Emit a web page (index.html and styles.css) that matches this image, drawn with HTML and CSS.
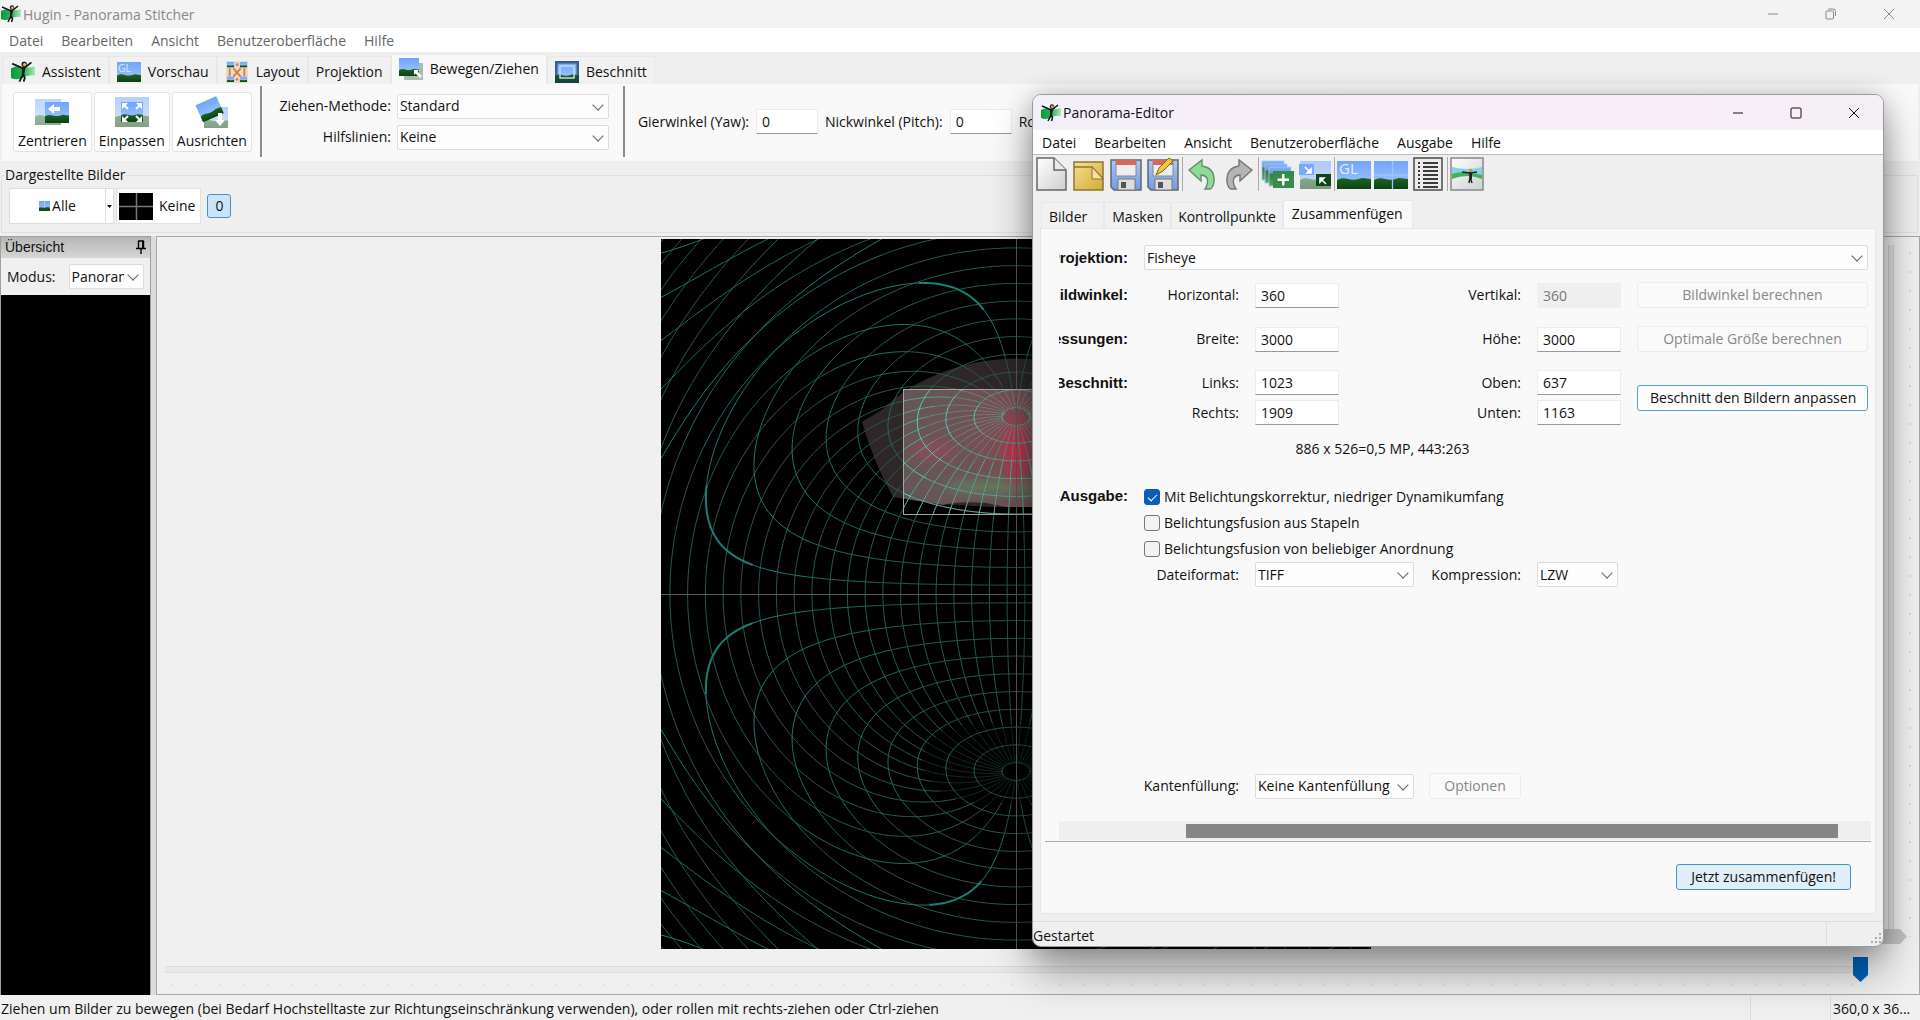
FILE: index.html
```html
<!DOCTYPE html>
<html lang="de">
<head>
<meta charset="utf-8">
<title>Hugin - Panorama Stitcher</title>
<link rel="stylesheet" href="styles.css">
</head>
<body>
<svg class="defs" aria-hidden="true">
  <defs>
    <linearGradient id="sky" x1="0" y1="0" x2="0" y2="1"><stop offset="0" stop-color="#6fa5fb"/><stop offset="1" stop-color="#a4c8ff"/></linearGradient>
    <linearGradient id="hill" x1="0" y1="0" x2="0" y2="1"><stop offset="0" stop-color="#1f6420"/><stop offset="1" stop-color="#0b4214"/></linearGradient>
    <linearGradient id="paper" x1="0" y1="0" x2="1" y2="1"><stop offset="0" stop-color="#fff"/><stop offset="1" stop-color="#cfcfcf"/></linearGradient>
    <linearGradient id="gold" x1="0" y1="0" x2="1" y2="1"><stop offset="0" stop-color="#f7e08a"/><stop offset="1" stop-color="#d3aa3a"/></linearGradient>
    <linearGradient id="disk" x1="0" y1="0" x2="0" y2="1"><stop offset="0" stop-color="#a9c8f7"/><stop offset="1" stop-color="#6f9de6"/></linearGradient>
    <linearGradient id="leaf" x1="0" y1="0" x2="1" y2="0"><stop offset="0" stop-color="#0a9a3c"/><stop offset=".55" stop-color="#2cb457"/><stop offset="1" stop-color="#a9ecb6"/></linearGradient>
    <linearGradient id="stack" x1="0" y1="0" x2="0" y2="1"><stop offset="0" stop-color="#7fb0fb"/><stop offset=".3" stop-color="#6f9fd8"/><stop offset=".4" stop-color="#2f7c42"/><stop offset="1" stop-color="#5fa468"/></linearGradient>
  </defs>
  <symbol id="land" viewBox="0 0 34 28" preserveAspectRatio="none"><rect width="34" height="28" fill="url(#sky)"/><path d="M0 19Q5 16 11 18Q18 20 25 17L34 18V28H0Z" fill="url(#hill)"/></symbol>
  <symbol id="man" viewBox="0 0 20 18"><path d="M0 6Q5 3 10 5Q15 6 20 4V12Q14 11 9 14Q4 16 0 14Z" fill="url(#leaf)"/><path d="M1 2L9 5.500L12 5L17 1M10.500 5L10 11L7 17M10 10L11.500 14L10.500 17" stroke="#151515" stroke-width="1.500" fill="none"/><path d="M9 5H12L11 11H9Z" fill="#151515"/><circle cx="11" cy="2.500" r="2.200" fill="#222"/><circle cx="11.300" cy="2.800" r="1.300" fill="#e6c54a"/></symbol>
</svg>

<div class="main-window">
  <header class="titlebar">
    <svg class="app-icon"><use href="#man"/></svg>
    <span class="title">Hugin - Panorama Stitcher</span>
    <button class="win-btn" aria-label="Minimieren"><svg viewBox="0 0 12 12"><path d="M1 6H11"/></svg></button>
    <button class="win-btn" aria-label="Wiederherstellen"><svg viewBox="0 0 12 12"><rect x="1" y="3" width="7.500" height="8" rx="1"/><path d="M3 1.500Q3 1 4 1H8Q10.500 1 10.500 3.500V8"/></svg></button>
    <button class="win-btn" aria-label="Schließen"><svg viewBox="0 0 12 12"><path d="M1 1L11 11M11 1L1 11"/></svg></button>
  </header>
  <nav class="menubar">
    <a href="#">Datei</a><a href="#">Bearbeiten</a><a href="#">Ansicht</a><a href="#">Benutzeroberfläche</a><a href="#">Hilfe</a>
  </nav>
  <div class="tabs" role="tablist">
    <button role="tab" class="tab"><svg class="tab-icon" viewBox="0 0 20 18"><use href="#man"/></svg>Assistent</button>
    <button role="tab" class="tab"><svg class="tab-icon" viewBox="0 0 25 21"><use href="#land" width="25" height="21"/><text class="gl-small" x="1" y="11">GL</text></svg>Vorschau</button>
    <button role="tab" class="tab"><svg class="tab-icon" viewBox="0 0 24 24"><rect width="24" height="24" fill="#e3dccf"/><use href="#land" x="1" y="1" width="8" height="6"/><use href="#land" x="15" y="1" width="8" height="6"/><use href="#land" x="1" y="17" width="8" height="6"/><use href="#land" x="15" y="17" width="8" height="6"/><path d="M4 8V17M20 8V17M8 8L16 17M16 8L8 17" stroke="#e07a35" stroke-width="2" fill="none"/><circle cx="12" cy="4" r="1.500" fill="#e07a35"/><circle cx="12" cy="20" r="1.500" fill="#e07a35"/></svg>Layout</button>
    <button role="tab" class="tab">Projektion</button>
    <button role="tab" class="tab active" aria-selected="true"><svg class="tab-icon" viewBox="0 0 24 22"><rect x="5" y="5" width="19" height="17" fill="#a9bfae"/><use href="#land" width="20" height="18"/><path d="M15 12H20L18.500 13.500L23 18L21 20L16.500 15.500L15 17Z" fill="#fff"/></svg>Bewegen/Ziehen</button>
    <button role="tab" class="tab"><svg class="tab-icon" viewBox="0 0 24 22"><use href="#land" width="24" height="22"/><rect x="1" y="1" width="22" height="20" fill="none" stroke="#1d3f5c" stroke-width="3" opacity=".7"/><rect x="5" y="5" width="14" height="12" fill="none" stroke="#c3d9ee" stroke-width="1.500"/></svg>Beschnitt</button>
  </div>
  <section class="drag-panel">
    <div class="big-buttons">
      <button class="big-btn"><svg viewBox="0 0 34 30"><use href="#land" y="2" width="26" height="26" opacity=".45"/><use href="#land" x="10" y="5" width="24" height="21"/><path d="M13 12L19 7V10H25V14H19V17Z" fill="#fff"/></svg>Zentrieren</button>
      <button class="big-btn"><svg viewBox="0 0 34 30"><use href="#land" width="34" height="30" opacity=".5"/><use href="#land" x="6" y="5" width="22" height="20"/><path d="M7 6H13L7 12ZM27 6H21L27 12ZM7 25H13L7 19ZM27 25H21L27 19Z" fill="#fff"/><path d="M8 7L13 12M26 7L21 12M8 24L13 19M26 24L21 19" stroke="#fff" stroke-width="2"/></svg>Einpassen</button>
      <button class="big-btn"><svg viewBox="0 0 34 32"><use href="#land" x="9" y="11" width="24" height="21" opacity=".5"/><g transform="rotate(-24 14 13)"><use href="#land" x="3" y="4" width="23" height="19"/></g><path d="M23 17H27V24H30L25 30L20 24H23Z" fill="#fff"/></svg>Ausrichten</button>
    </div>
    <div class="vline"></div>
    <div class="drag-options">
      <label for="drag">Ziehen-Methode:</label>
      <span class="select"><select id="drag"><option>Standard</option></select></span>
      <label for="guides">Hilfslinien:</label>
      <span class="select"><select id="guides"><option>Keine</option></select></span>
    </div>
    <div class="vline"></div>
    <div class="angles">
      <label for="yaw">Gierwinkel (Yaw):</label><input id="yaw" type="text" value="0">
      <label for="pitch">Nickwinkel (Pitch):</label><input id="pitch" type="text" value="0">
      <label for="roll">Ro</label>
    </div>
  </section>
  <fieldset class="shown-images">
    <legend>Dargestellte Bilder</legend>
    <div class="split-btn">
      <button class="all-btn"><svg viewBox="0 0 11 10"><use href="#land" width="11" height="10"/><path d="M5.500 0V6" stroke="#cfe0ff" stroke-width=".6"/></svg>Alle</button><button class="drop-btn" aria-label="Auswahl"><svg viewBox="0 0 5 3"><path d="M0 0H5L2.500 3Z"/></svg></button>
    </div>
    <button class="none-btn"><svg viewBox="0 0 34 27"><rect width="34" height="27"/><path d="M17.500 0V27M0 13.500H34" stroke="#777" stroke-width="1.500"/></svg>Keine</button>
    <button class="image-toggle" aria-pressed="true">0</button>
  </fieldset>
  <main class="workspace">
    <aside class="overview">
      <div class="pane-caption"><span>Übersicht</span><svg viewBox="0 0 10 14"><path d="M2 1H8M2.500 1V8M7.500 1V8M0 8.500H10M5 9V14" stroke="#000" fill="none" stroke-width="1.400"/><path d="M6 1H8V8H6Z"/></svg></div>
      <div class="mode-row">
        <label for="mode">Modus:</label>
        <span class="select"><select id="mode"><option>Panorama</option></select></span>
      </div>
      <div class="overview-canvas"></div>
    </aside>
    <section class="preview">
      <svg class="pano" viewBox="0 0 710 710">
        <defs>
          <clipPath id="frame"><rect width="710" height="710"/></clipPath>
          <clipPath id="crop"><rect x="242" y="151" width="210" height="124"/></clipPath>
          <radialGradient id="glow" gradientUnits="userSpaceOnUse" cx="355" cy="195" r="150"><stop offset="0" stop-color="#8e4853"/><stop offset=".35" stop-color="#705253"/><stop offset="1" stop-color="#605858"/></radialGradient>
          <radialGradient id="red" gradientUnits="userSpaceOnUse" cx="355" cy="214" r="44" gradientTransform="translate(213 0) scale(.4 1)"><stop offset="0" stop-color="#cf2c4c"/><stop offset="1" stop-color="#cf2c4c" stop-opacity="0"/></radialGradient>
          <filter id="soft" x="-30%" y="-100%" width="160%" height="300%"><feGaussianBlur stdDeviation="6"/></filter>
          <g id="graticule"></g>
        </defs>
        <rect width="710" height="710"/>
        <path d="M201 183L222 170Q250 142 300 127Q355 112 410 127Q470 142 509 183Q500 230 478 262L400 268H330L280 265L232 258Q212 222 201 183Z" fill="#2e2627"/>
        <g clip-path="url(#crop)">
          <path d="M201 183Q250 130 355 120Q470 130 509 183Q500 230 478 262L400 268H345L325 264Q300 262 282 266L232 258Q212 222 201 183Z" fill="url(#glow)"/>
          <ellipse cx="335" cy="248" rx="52" ry="5" fill="#5f8a62" filter="url(#soft)"/>
          <ellipse cx="272" cy="212" rx="22" ry="10" fill="#98485a" filter="url(#soft)" opacity=".7"/>
          <circle cx="355" cy="214" r="44" fill="url(#red)"/>
        </g>
        <g clip-path="url(#frame)"><use href="#graticule" class="grid-lines"/></g>
        <g clip-path="url(#crop)"><use href="#graticule" class="grid-lines lit"/></g>
        <path d="M0 355.500H710M355.500 0V710" stroke="#555b59" fill="none"/>
        <rect x="242.500" y="150.500" width="210" height="125" fill="none" stroke="#a5a5a5"/>
      </svg>
      <div class="v-slider">
        <input type="range" class="range-v" min="0" max="360" value="360" aria-label="Vertikaler Bildwinkel">
        <div class="v-ticks"></div>
      </div>
      <div class="h-slider">
        <input type="range" class="range-h" min="0" max="360" value="360" aria-label="Horizontaler Bildwinkel">
        <div class="h-ticks"></div>
      </div>
    </section>
  </main>
  <footer class="statusbar">
    <span class="status-text">Ziehen um Bilder zu bewegen (bei Bedarf Hochstelltaste zur Richtungseinschränkung verwenden), oder rollen mit rechts-ziehen oder Ctrl-ziehen</span>
    <span class="status-mid"></span>
    <span class="status-fov">360,0 x 36...</span>
  </footer>
</div>

<div class="editor-window">
  <header class="titlebar">
    <svg class="app-icon"><use href="#man"/></svg>
    <span class="title">Panorama-Editor</span>
    <button class="win-btn" aria-label="Minimieren"><svg viewBox="0 0 12 12"><path d="M1 6H11"/></svg></button>
    <button class="win-btn" aria-label="Maximieren"><svg viewBox="0 0 12 12"><rect x="1" y="1" width="10" height="10" rx="1"/></svg></button>
    <button class="win-btn" aria-label="Schließen"><svg viewBox="0 0 12 12"><path d="M1 1L11 11M11 1L1 11"/></svg></button>
  </header>
  <nav class="menubar">
    <a href="#">Datei</a><a href="#">Bearbeiten</a><a href="#">Ansicht</a><a href="#">Benutzeroberfläche</a><a href="#">Ausgabe</a><a href="#">Hilfe</a>
  </nav>
  <div class="toolbar">
    <button aria-label="Neu"><svg viewBox="0 0 34 34"><path d="M2 1H19L31 13V33H2Z" fill="url(#paper)" stroke="#666" stroke-width="1.500"/><path d="M19 1V13H31" fill="#e9e9e9" stroke="#666" stroke-width="1.500"/></svg></button>
    <button aria-label="Öffnen"><svg viewBox="0 0 34 34"><path d="M2 5H31V33H2Z" fill="url(#gold)" stroke="#8d7532" stroke-width="1.500"/><path d="M2 10H20L31 22" fill="none" stroke="#8d7532" stroke-width="1.500"/><path d="M20 10V22H31Z" fill="#f5e1a0" stroke="#8d7532"/></svg></button>
    <button aria-label="Speichern"><svg viewBox="0 0 34 34"><path d="M2 3H32V33H5L2 30Z" fill="url(#disk)" stroke="#666" stroke-width="1.500"/><rect x="7" y="3" width="20" height="16" fill="#eee" stroke="#888"/><rect x="7" y="3" width="20" height="5" fill="#d9675b"/><rect x="9" y="22" width="17" height="11" fill="#dedede" stroke="#777"/><rect x="12" y="25" width="5" height="6" fill="#555"/></svg></button>
    <button aria-label="Speichern unter"><svg viewBox="0 0 34 34"><path d="M2 3H32V33H5L2 30Z" fill="url(#disk)" stroke="#666" stroke-width="1.500"/><rect x="7" y="3" width="20" height="16" fill="#eee" stroke="#888"/><rect x="7" y="3" width="20" height="5" fill="#d9675b"/><path d="M10 18L13 11L23 1L27 4L17 14Z" fill="#f0c63e" stroke="#7e6526"/><rect x="9" y="22" width="17" height="11" fill="#dedede" stroke="#777"/><rect x="12" y="25" width="5" height="6" fill="#555"/></svg></button>
    <span class="tool-sep"></span>
    <button aria-label="Rückgängig"><svg viewBox="0 0 34 34"><path d="M4 13L17 3V9Q30 11 29 25Q28 31 25 32H20Q24 26 22 21Q20 18 16 18V24Z" fill="#8edb96" stroke="#668a6b" stroke-width="1.400"/></svg></button>
    <button aria-label="Wiederholen"><svg viewBox="0 0 34 34"><path d="M30 13L17 3V9Q4 11 5 25Q6 31 9 32H14Q10 26 12 21Q14 18 18 18V24Z" fill="#b5b5b5" stroke="#757575" stroke-width="1.400"/></svg></button>
    <span class="tool-sep"></span>
    <button aria-label="Bilder hinzufügen"><svg viewBox="0 0 34 34"><rect x="1" y="4" width="22" height="19" fill="url(#stack)" stroke="#a9c9f5" stroke-width=".8"/><rect x="4" y="7" width="22" height="19" fill="url(#stack)" stroke="#a9c9f5" stroke-width=".8"/><rect x="8" y="10" width="22" height="19" fill="url(#stack)" stroke="#a9c9f5" stroke-width=".8"/><rect x="12" y="14" width="21" height="17" fill="#358b47"/><path d="M21 17H23.500V21.500H28V24H23.500V28.500H21V24H16.500V21.500H21Z" fill="#fff"/></svg></button>
    <button aria-label="Vorschau aktualisieren"><svg viewBox="0 0 34 34"><use href="#land" x="2" y="4" width="31" height="28" opacity=".5"/><rect x="1" y="7" width="15" height="11" fill="#76a9fb"/><rect x="18" y="17" width="15" height="12" fill="#0d4616"/><path d="M7 10L12 15M13 12V16H9ZM28 27L23 22M22 25V21H26Z" stroke="#fff" stroke-width="1.600" fill="#fff"/></svg></button>
    <span class="tool-sep"></span>
    <button aria-label="GL-Vorschau"><svg viewBox="0 0 34 34"><use href="#land" y="4" width="34" height="28"/><text class="gl-big" x="2" y="17">GL</text></svg></button>
    <button aria-label="Vorschau"><svg viewBox="0 0 34 34"><use href="#land" y="4" width="34" height="28"/><path d="M18.500 4V32M0 18H34" stroke="#9fc3ff" stroke-width="1.300"/></svg></button>
    <button aria-label="Kontrollpunktliste"><svg viewBox="0 0 34 34"><rect x="3" y="1" width="28" height="32" fill="#ececec" stroke="#555" stroke-width="1.600"/><path d="M12 6H27M12 10H27M12 14H27M12 18H27M12 22H27M12 26H27M12 30H27" stroke="#000" stroke-width="1.700"/><path d="M7 6H9M7 10H9M7 14H9M7 18H9M7 22H9M7 26H9M7 30H9" stroke="#000" stroke-width="1.700"/></svg></button>
    <span class="tool-sep"></span>
    <button aria-label="Panorama"><svg viewBox="0 0 34 34"><rect x="1" y="1" width="32" height="32" fill="url(#paper)" stroke="#888" stroke-width="1.500"/><path d="M2 10Q17 14 32 10V20Q17 15 2 20Z" fill="#85d0ea"/><path d="M2 17Q10 14 17 16Q26 16 32 18V22Q17 16 2 22Z" fill="#45b153"/><path d="M12 15L20 16L27 15M20 15V21L19 26M20 20L22 26" stroke="#222" stroke-width="1.500" fill="none"/><path d="M19 15H22V22H20Z" fill="#222"/><circle cx="20.500" cy="13.500" r="1.800" fill="#c39c3c"/></svg></button>
  </div>
  <div class="editor-tabs" role="tablist">
    <button role="tab" class="tab">Bilder</button><button role="tab" class="tab">Masken</button><button role="tab" class="tab">Kontrollpunkte</button><button role="tab" class="tab active" aria-selected="true">Zusammenfügen</button>
  </div>
  <section class="stitch-panel">
    <form class="stitch-form">
      <div class="form-row">
        <label class="head" for="proj"><span>Projektion:</span></label>
        <span class="select span-all"><select id="proj"><option>Fisheye</option></select></span>
      </div>
      <div class="form-row gap-s">
        <div class="head"><span>Bildwinkel:</span></div>
        <label for="hfov">Horizontal:</label><input id="hfov" type="text" value="360">
        <label for="vfov">Vertikal:</label><input id="vfov" type="text" value="360" disabled>
        <button type="button" class="btn" disabled>Bildwinkel berechnen</button>
      </div>
      <div class="form-row gap-m">
        <div class="head"><span>Abmessungen:</span></div>
        <label for="w">Breite:</label><input id="w" type="text" value="3000">
        <label for="h">Höhe:</label><input id="h" type="text" value="3000">
        <button type="button" class="btn" disabled>Optimale Größe berechnen</button>
      </div>
      <div class="form-row gap-m">
        <div class="head"><span>Beschnitt:</span></div>
        <label for="l">Links:</label><input id="l" type="text" value="1023">
        <label for="t">Oben:</label><input id="t" type="text" value="637">
        <button type="button" class="btn primary two-rows">Beschnitt den Bildern anpassen</button>
        <label class="second" for="r">Rechts:</label><input id="r" type="text" value="1909">
        <label for="b">Unten:</label><input id="b" type="text" value="1163">
      </div>
      <div class="form-row gap-info"><output class="crop-info">886 x 526=0,5 MP, 443:263</output></div>
      <div class="form-row gap-l">
        <div class="head"><span>Panorama-Ausgabe:</span></div>
        <div class="checks">
          <label><input type="checkbox" checked>Mit Belichtungskorrektur, niedriger Dynamikumfang</label>
          <label><input type="checkbox">Belichtungsfusion aus Stapeln</label>
          <label><input type="checkbox">Belichtungsfusion von beliebiger Anordnung</label>
        </div>
      </div>
      <div class="form-row format-row">
        <label class="second" for="fmt">Dateiformat:</label><span class="select wide"><select id="fmt"><option>TIFF</option></select></span>
        <label class="fourth" for="comp">Kompression:</label><span class="select comp"><select id="comp"><option>LZW</option></select></span>
      </div>
      <div class="form-row blend-row">
        <label class="second" for="fill">Kantenfüllung:</label><span class="select wide"><select id="fill"><option>Keine Kantenfüllung</option></select></span>
        <button type="button" class="btn options-btn" disabled>Optionen</button>
      </div>
    </form>
    <div class="h-scroll"><div class="h-scroll-thumb"></div></div>
    <div class="stitch-actions"><button class="btn stitch-btn">Jetzt zusammenfügen!</button></div>
  </section>
  <footer class="editor-status"><span>Gestartet</span><span class="grip"><svg viewBox="0 0 12 12"><path d="M8 0h2v2h-2zM4 4h2v2h-2zM8 4h2v2h-2zM0 8h2v2h-2zM4 8h2v2h-2zM8 8h2v2h-2z" fill="#aaa"/></svg></span></footer>
</div>
<script src="script.js"></script>
</body>
</html>
```
FILE: styles.css
```css
* { box-sizing: border-box; }
body { margin: 0; font: 14px/20px "Open Sans", "Noto Sans", sans-serif; color: #111; background: #efefef; overflow: hidden; }
button, input, select { font: inherit; color: inherit; margin: 0; }
button { padding: 0; border: 0; background: none; }
a { color: inherit; text-decoration: none; }
.defs { position: absolute; width: 0; height: 0; }

.main-window { height: 100vh; display: flex; flex-direction: column; }
.titlebar { display: flex; align-items: center; height: 28px; background: #f3f3f3; color: #888; }
.app-icon { width: 20px; height: 18px; margin-left: 1px; }
.title { flex: 1; padding: 1px 0 0 2px; }
.win-btn { width: 58px; height: 28px; display: grid; place-items: center; }
.main-window .win-btn:last-child { margin-right: 2px; }
.win-btn svg { width: 12px; height: 12px; fill: none; stroke: currentColor; }
.menubar { display: flex; gap: 18px; height: 24px; align-items: center; padding: 2px 0 0 9px; background: #fff; color: #666; }

.tabs { display: flex; align-items: flex-end; height: 32px; padding: 2px 0 0 3px; background: #efefef; flex: none; }
.tab { display: flex; align-items: center; gap: 7px; height: 28px; padding: 2px 7px 0; border: 1px solid #e8e8e8; border-bottom: 0; background: #f1f1f1; }
.tab.active { height: 30px; background: #f9f9f9; padding-bottom: 3px; }
.tab-icon { width: 24px; height: 22px; }
.gl-small { font-size: 11px; fill: #dbe9ff; }
.gl-big { font-size: 15px; fill: #e3eeff; }

.drag-panel { display: flex; align-items: center; height: 77px; margin: 0 2px; padding: 0 0 2px 11px; background: #f9f9f9; flex: none; }
.big-buttons { display: flex; gap: 2px; margin-right: 8px; }
.big-btn { display: flex; flex-direction: column; align-items: center; justify-content: space-between; height: 60px; padding: 3px 4px 0; border: 1px solid #e2e2e2; border-radius: 3px; background: #fff; }
.big-btn svg { width: 34px; height: 32px; }
.vline { width: 2px; height: 71px; background: #8c8c8c; }
.drag-options { display: grid; grid-template-columns: 116px 212px; gap: 6px 6px; padding: 0 14px 0 13px; align-items: center; justify-items: end; }
.select { position: relative; display: block; width: 100%; height: 25px; }
.select select { width: 100%; height: 100%; appearance: none; padding: 0 19px 0 2px; border: 1px solid #dcdcdc; background: #fdfdfd; border-radius: 2px; display: block; overflow: hidden; }
.select::after { content: ""; position: absolute; right: 7px; top: 7px; width: 7px; height: 7px; border: solid #666; border-width: 0 1px 1px 0; transform: rotate(45deg); pointer-events: none; }
input[type="text"] { height: 25px; min-width: 0; padding: 0 5px; border: 1px solid #ececec; border-bottom-color: #999; background: #fff; }
input[type="text"]:disabled { background: #efefef; border-color: #efefef; color: #777; }
.angles { display: flex; align-items: center; gap: 7px; padding-left: 13px; }
.angles input { width: 62px; }

.shown-images { display: flex; align-items: center; gap: 2px; margin: 4px 2px 0 1px; height: 68px; min-width: 0; padding: 3px 0 0 7px; border: 1px solid #e0e0e0; flex: none; }
.shown-images legend { padding: 0 1px; margin-left: -5px; }
.split-btn { display: flex; border: 1px solid #dedede; background: #fff; height: 36px; }
.all-btn { width: 95px; display: flex; align-items: center; justify-content: center; gap: 2px; }
.all-btn svg { width: 11px; height: 10px; }
.drop-btn { width: 8px; border-left: 1px solid #dedede; display: grid; place-items: center; }
.drop-btn svg { width: 5px; height: 3px; }
.none-btn { display: flex; align-items: center; gap: 6px; height: 36px; padding: 0 5px 0 2px; border: 1px solid #e2e2e2; background: #fff; }
.none-btn svg { width: 34px; height: 27px; }
.image-toggle { width: 24px; height: 24px; margin-left: 4px; border: 1px solid #4a90c8; border-radius: 3px; background: #cce4f7; }

.workspace { flex: 1; display: flex; margin-top: 3px; min-height: 0; background: #dcdcdc; gap: 5px; }
.overview { width: 151px; display: flex; flex-direction: column; border: 1px solid #a0a0a0; border-bottom: 0; background: #f0f0f0; }
.pane-caption { display: flex; justify-content: space-between; align-items: center; height: 21px; padding: 0 4px 2px; background: linear-gradient(#b6b6b6, #d6d6d6); font: 14px/20px "Liberation Sans", Arial, sans-serif; }
.pane-caption svg { width: 10px; height: 14px; }
.mode-row { display: flex; align-items: center; gap: 13px; height: 37px; padding: 0 6px; }
.mode-row .select { flex: 1; }
.overview-canvas { flex: 1; background: #000; }
.preview { flex: 1; display: grid; grid-template-columns: 1fr 44px; grid-template-rows: 1fr 45px; border: 1px solid #a8a8a8; background: #f0f0f0; min-width: 0; }
.pano { width: 100%; height: 100%; min-height: 0; padding-top: 2px; }
.grid-lines { fill: none; }
.g0 { stroke: #2f665a; stroke-width: 1; opacity: .4; }
.g1 { stroke: #28594f; stroke-width: 1; }
.g2 { stroke: #216e63; stroke-width: 1; }
.g3 { stroke: #1c7f74; stroke-width: 1; }
.g4 { stroke: #1a8076; stroke-width: 2; }
.lit { filter: saturate(.6) brightness(2.200); opacity: .8; }
.v-slider { grid-row: 1 / 3; grid-column: 2; display: flex; padding: 8px 0 50px 7px; }
.h-slider { grid-row: 2; grid-column: 1; padding: 7px 7px 0 8px; }
.range-v { appearance: none; writing-mode: vertical-lr; width: 25px; height: 100%; margin: 0; background: linear-gradient(90deg, transparent 6px, #d2d2d2 6px 7px, #e4e4e4 7px 11px, #d2d2d2 11px 12px, transparent 12px); }
.range-h { appearance: none; display: block; width: 100%; height: 27px; margin: 0; background: linear-gradient(transparent 10px, #dcdcdc 10px 11px, #e8e8e8 11px 16px, #dcdcdc 16px 17px, transparent 17px); }
.range-h::-webkit-slider-thumb { appearance: none; width: 15px; height: 25px; background: #0064b8; clip-path: polygon(0 0, 100% 0, 100% 72%, 50% 100%, 0 72%); }
.range-v::-webkit-slider-thumb { appearance: none; width: 25px; height: 15px; background: #c4c4c4; clip-path: polygon(0 0, 72% 0, 100% 50%, 72% 100%, 0 100%); }
.v-ticks { width: 2px; margin: 7px 0 7px 2px; background: repeating-linear-gradient(#d8d8d8 0 2px, transparent 2px 19px); }
.h-ticks { height: 3px; margin: 0 7px; background: repeating-linear-gradient(90deg, #d8d8d8 0 1px, transparent 1px 24px); }

.statusbar { display: flex; height: 25px; flex: none; line-height: 28px; padding-left: 1px; background: #f0f0f0; }
.status-text { flex: 1; }
.status-mid { width: 80px; border-left: 1px solid #ddd; }
.status-fov { width: 90px; padding-left: 2px; border-left: 1px solid #ddd; }

.editor-window { position: absolute; left: 53.750%; right: 36px; top: 94px; border: 1px solid #9a9a9a; border-radius: 9px; background: #efefef; overflow: hidden; box-shadow: 0 24px 44px rgba(0,0,0,.36), 0 2px 24px rgba(0,0,0,.22); }
.editor-window .titlebar { height: 35px; padding-left: 7px; color: #111; background: linear-gradient(90deg, #f2f0f8, #f9edf7 40%, #f9edf7 75%, #f4f0f6); }
.editor-window .menubar { height: 25px; color: #111; border-bottom: 1px solid #bbb; }
.toolbar { display: flex; align-items: center; height: 38px; padding-left: 2px; gap: 3px; margin-bottom: 7px; }
.toolbar button { width: 34px; height: 34px; }
.toolbar button svg { display: block; width: 34px; height: 34px; }
.tool-sep { width: 1px; height: 34px; margin: 0 -1px; background: #aaa; }
.editor-tabs { display: flex; align-items: flex-end; height: 28px; padding-left: 8px; }
.editor-tabs .tab { height: 26px; padding: 2px 6px 0; }
.editor-tabs .tab:first-child { padding: 2px 16px 0 7px; }
.editor-tabs .tab:nth-child(2) { padding: 2px 7px 0; }
.editor-tabs .tab.active { height: 28px; padding: 0 9px 1px 8px; }
.stitch-panel { margin: 0 7px 7px; height: 686px; background: #f9f9f9; border: 1px solid #e6e6e6; }
.stitch-form { height: 592px; padding: 16px 7px 0 18px; display: flex; flex-direction: column; }
.form-row { display: grid; grid-template-columns: 69px 95px 84px 1fr 84px 231px; column-gap: 16px; row-gap: 5px; align-items: center; min-height: 25px; flex: none; }
.form-row > label { justify-self: end; white-space: nowrap; }
.form-row > .head { display: flex; justify-content: flex-end; width: 69px; overflow: hidden; white-space: nowrap; font: bold 15px/20px "Liberation Sans", Arial, sans-serif; }
.gap-s { margin-top: 12px; }
.gap-m { margin-top: 18px; }
.gap-info { margin-top: 11px; }
.gap-l { margin-top: 23px; }
.span-all { grid-column: 2 / -1; }
.two-rows { grid-column: 6; grid-row: 1 / 3; }
.form-row > .second { grid-column: 2; }
.fourth { grid-column: 4; grid-row: 1; }
.wide { grid-column: 3 / 5; grid-row: 1; justify-self: start; width: 159px; }
.comp { width: 81px; grid-row: 1; grid-column: 5; }
.btn { height: 26px; padding: 0 12px; border: 1px solid #d8d8d8; border-radius: 3px; background: #fdfdfd; white-space: nowrap; }
.btn:disabled { color: #888; border-color: #ececec; background: #fafafa; }
.primary { border-color: #5a9bd0; }
.crop-info { grid-column: 2 / 6; justify-self: center; }
.checks { grid-column: 2 / -1; display: flex; flex-direction: column; }
.checks label { display: flex; align-items: center; gap: 4px; height: 26px; }
.checks input { appearance: none; width: 16px; height: 16px; margin: 0; border: 1px solid #777; border-radius: 3px; background: #f2f2f2; display: grid; place-items: center; }
.checks input:checked { background: #0a5cb8; border-color: #0a5cb8; }
.checks input:checked::after { content: ""; width: 8px; height: 4px; border: solid #fff; border-width: 0 0 1px 1px; transform: rotate(-45deg); margin-bottom: 2px; }
.form-row > .head:has(+ .checks) { align-self: start; margin-top: 2px; }
.form-row.blend-row { margin-top: auto; margin-bottom: 22px; }
.options-btn { grid-column: 4 / 6; grid-row: 1; justify-self: start; margin-left: 74px; width: 92px; }
.h-scroll { margin: 0 4px 0 18px; height: 19px; padding: 3px 33px 2px 127px; background: #efefef; }
.h-scroll-thumb { height: 14px; background: #858585; }
.stitch-actions { margin: 1px 4px 0; border-top: 1px solid #aaa; padding: 22px 20px 0; display: flex; justify-content: flex-end; }
.stitch-btn { padding: 0 14px; background: #e0eef9; border-color: #4a90c8; }
.editor-status { display: flex; justify-content: space-between; height: 25px; line-height: 27px; border-top: 1px solid #ddd; }
.grip { width: 57px; border-left: 1px solid #ddd; display: flex; justify-content: flex-end; align-items: flex-end; padding: 0 0 1px; }
.grip svg { width: 12px; height: 12px; }
```
FILE: script.js
```js
// Draws the 9° graticule of a 360° equidistant fisheye projection.
(function () {
  var scale = 355 / 180, rad = Math.PI / 180, bins = ["", "", "", "", ""];

  function project(lat, lon, outer) {
    var a = lat * rad, o = lon * rad;
    var c = Math.acos(Math.cos(a) * Math.cos(o));
    var s = Math.sin(c) || 1e-9;
    var ux = Math.cos(a) * Math.sin(o) / s, uy = -Math.sin(a) / s;
    var r = c / rad;
    if (outer) { r = -(360 - r); }
    return [355 + r * ux * scale, 355 + r * uy * scale];
  }

  function inside(p) {
    return Math.abs(p[0] - 355) < 420 && Math.abs(p[1] - 355) < 420;
  }

  function trace(point, offset, from, to) {
    for (var outer = 0; outer < 2; outer++) {
      var t = from, last = -1;
      while (t < to) {
        // Shorten the step where the projection stretches the line.
        var step = 1.5, p = point(t, outer), q = point(t + step, outer);
        while (step > 0.05 && Math.hypot(q[0] - p[0], q[1] - p[1]) > 5) {
          step /= 2;
          q = point(t + step, outer);
        }
        var dx = q[0] - p[0], dy = q[1] - p[1], len = Math.hypot(dx, dy);
        if (len < 60 && inside(p)) {
          var n = offset(t, outer);
          var across = Math.abs((n[0] - p[0]) * dy - (n[1] - p[1]) * dx) / (len || 1) / scale * 4;
          var bin = across < 0.5 ? 0 : across < 1.3 ? 1 : across < 2 ? 2 : across < 3.2 ? 3 : 4;
          if (bin !== last) { bins[bin] += "M" + p[0].toFixed(1) + " " + p[1].toFixed(1); }
          bins[bin] += "L" + q[0].toFixed(1) + " " + q[1].toFixed(1);
          last = bin;
        } else {
          last = -1;
        }
        t += step;
      }
    }
  }

  for (var lat = -85.5; lat < 90; lat += 9) {
    (function (k) {
      trace(function (t, o) { return project(k, t, o); }, function (t, o) { return project(k + 0.25, t, o); }, -180, 180);
    })(lat);
  }
  for (var lon = -175.5; lon < 180; lon += 9) {
    (function (k) {
      trace(function (t, o) { return project(t, k, o); }, function (t, o) { return project(t, k + 0.25, o); }, -85.5, 85.5);
    })(lon);
  }

  var group = document.getElementById("graticule");
  bins.forEach(function (d, i) {
    var path = document.createElementNS("http://www.w3.org/2000/svg", "path");
    path.setAttribute("d", d);
    path.setAttribute("class", "g" + i);
    group.appendChild(path);
  });
})();
```
